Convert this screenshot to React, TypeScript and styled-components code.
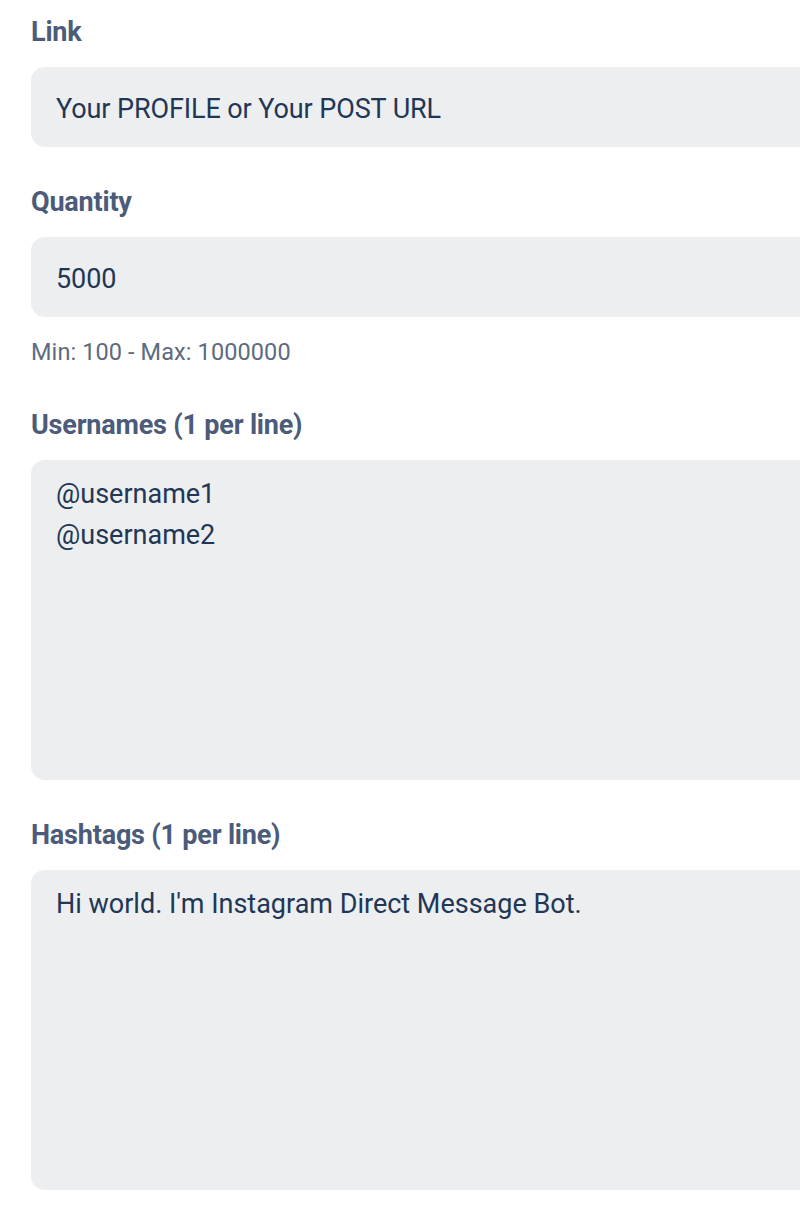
import React from "react";
import styled, { createGlobalStyle } from "styled-components";

const Global = createGlobalStyle`
  html, body { margin: 0; padding: 0; background: #ffffff; overflow: hidden; }
  body { font-family: Roboto, "Liberation Sans", sans-serif; }
`;

const Page = styled.div`
  width: 1000px;
  padding: 14px 0 0 31px;
  display: flex;
  flex-direction: column;
`;

const Field = styled.div<{ $mb: number }>`
  display: flex;
  flex-direction: column;
  margin-bottom: ${(p) => p.$mb}px;
`;

const Label = styled.label`
  font-size: 27px;
  font-weight: 700;
  color: #4b5b79;
  line-height: 36px;
  margin-bottom: 17px;
  letter-spacing: -0.2px;
`;

const Input = styled.div`
  box-sizing: border-box;
  height: 80px;
  background: #eceef0;
  border-radius: 14px;
  padding: 3px 25px 0;
  display: flex;
  align-items: center;
  font-size: 27px;
  color: #223656;
  letter-spacing: -0.1px;
`;

const TextArea = styled.div`
  box-sizing: border-box;
  height: 320px;
  background: #eceef0;
  border-radius: 14px;
  padding: 14px 25px;
  font-size: 27px;
  line-height: 41px;
  color: #223656;
  white-space: pre-line;
`;

const Hint = styled.div`
  font-size: 23.5px;
  color: #5c6b80;
  margin-top: 20px;
  line-height: 30px;
  letter-spacing: 0.1px;
`;

export default function App() {
  return (
    <>
      <Global />
      <Page>
        <Field $mb={37}>
          <Label>Link</Label>
          <Input>Your PROFILE or Your POST URL</Input>
        </Field>
        <Field $mb={40}>
          <Label>Quantity</Label>
          <Input>5000</Input>
          <Hint>Min: 100 - Max: 1000000</Hint>
        </Field>
        <Field $mb={37}>
          <Label>Usernames (1 per line)</Label>
          <TextArea>{"@username1\n@username2"}</TextArea>
        </Field>
        <Field $mb={0}>
          <Label>Hashtags (1 per line)</Label>
          <TextArea>Hi world. I'm Instagram Direct Message Bot.</TextArea>
        </Field>
      </Page>
    </>
  );
}
